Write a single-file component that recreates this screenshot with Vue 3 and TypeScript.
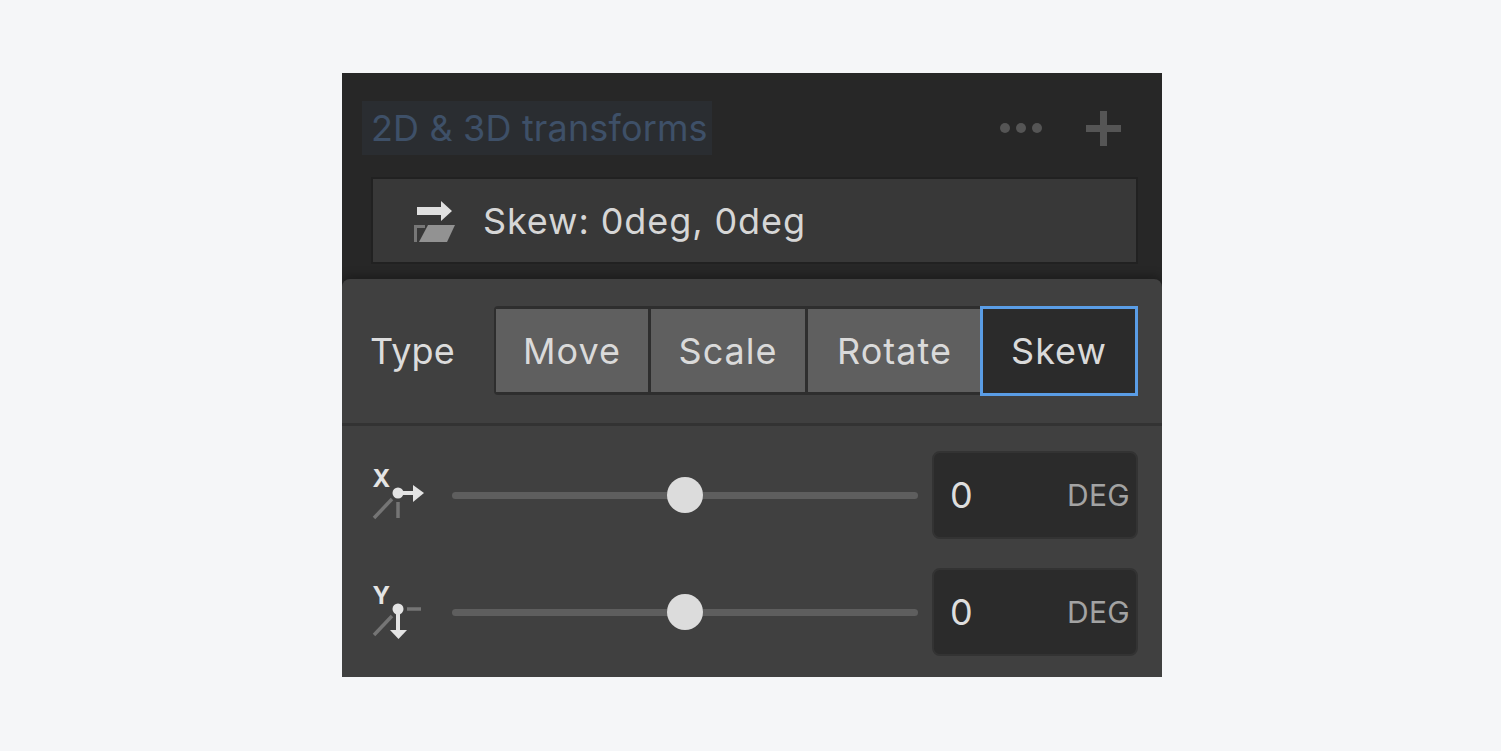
<script setup lang="ts">
const types = [
  { label: 'Move', width: 152, active: false },
  { label: 'Scale', width: 154, active: false },
  { label: 'Rotate', width: 173, active: false },
  { label: 'Skew', width: 158, active: true },
]
const axes = ['x', 'y']
</script>

<template>
  <main class="page">
    <section class="panel">
      <header class="head">
        <span class="title">2D &amp; 3D transforms</span>
        <div class="actions">
          <svg class="dots" width="42" height="10" viewBox="0 0 42 10"><circle cx="5" cy="5" r="5" /><circle cx="21" cy="5" r="5" /><circle cx="37" cy="5" r="5" /></svg>
          <svg class="plus" width="35" height="35" viewBox="0 0 35 35"><path d="M14 0h7v14h14v7H21v14h-7V21H0v-7h14z" /></svg>
        </div>
      </header>
      <div class="summary">
        <svg class="skew-icon" width="42" height="42" viewBox="0 0 42 42">
          <path d="M3 6h24V0l11 10-11 10v-6H3z" fill="#e0e0e0" />
          <path d="M14 24h27l-8 17H5z" fill="#929292" />
          <path d="M11 25.500H1.500V41" fill="none" stroke="#777" stroke-width="3" />
        </svg>
        <span>Skew: 0deg, 0deg</span>
      </div>
      <div class="editor">
        <div class="type-row">
          <span class="type-label">Type</span>
          <div class="segments">
            <button v-for="t in types" :key="t.label" class="segment" :class="{ active: t.active }" :style="{ width: t.width + 'px' }">{{ t.label }}</button>
          </div>
        </div>
        <div class="sliders">
          <div v-for="axis in axes" :key="axis" class="slider-row">
            <svg class="axis-icon" width="60" height="60" viewBox="0 0 60 60">
              <text x="2.500" y="22" class="axis-letter">{{ axis.toUpperCase() }}</text>
              <path d="M4 53 22 34" stroke="#757575" stroke-width="3.500" />
              <template v-if="axis === 'x'">
                <path d="M28 37v16" stroke="#757575" stroke-width="3.500" />
                <path d="M28 28h18" stroke="#e4e4e4" stroke-width="4" />
                <path d="M43 20l11 8-11 9z" fill="#e4e4e4" />
              </template>
              <template v-else>
                <path d="M37 27h14" stroke="#757575" stroke-width="3.500" />
                <path d="M28 27v24" stroke="#e4e4e4" stroke-width="4" />
                <path d="M20 48h17l-8.500 9z" fill="#e4e4e4" />
              </template>
              <circle cx="28" :cy="axis === 'x' ? 28 : 27" r="5.500" fill="#e4e4e4" />
            </svg>
            <div class="track"><span class="thumb"></span></div>
            <div class="number">
              <span class="value">0</span>
              <span class="unit">DEG</span>
            </div>
          </div>
        </div>
      </div>
    </section>
  </main>
</template>

<style>
html, body { margin: 0; background: #f5f6f8; }
</style>

<style scoped>
.page {
  width: 1501px;
  height: 751px;
  box-sizing: border-box;
  padding-top: 73px;
  display: flex;
  justify-content: center;
  background: #f5f6f8;
  overflow: hidden;
  font-family: Inter, "Liberation Sans", sans-serif;
  color: #d9d9d9;
}
.panel {
  width: 820px;
  height: 604px;
  margin-left: 3px;
  display: flex;
  flex-direction: column;
  background: #272727;
  overflow: hidden;
}
.head {
  height: 104px;
  box-sizing: border-box;
  padding: 28px 41px 0 20px;
  display: flex;
  justify-content: space-between;
  align-items: flex-start;
}
.title {
  height: 54px;
  width: 350px;
  box-sizing: border-box;
  padding-left: 9px;
  background: #2a2d31;
  color: #3e5068;
  font-size: 36px;
  line-height: 54px;
  letter-spacing: 0.15px;
  white-space: nowrap;
}
.actions {
  height: 54px;
  display: flex;
  align-items: center;
  gap: 44px;
}
.dots { fill: #555; }
.plus { fill: #555; }
.summary {
  margin: 0 24px 0 29px;
  height: 87px;
  box-sizing: border-box;
  border: 2px solid #212121;
  background: #383838;
  display: flex;
  align-items: center;
  padding-left: 41px;
  gap: 27px;
  font-size: 36px;
  letter-spacing: 0.9px;
  color: #d6d6d6;
}
.skew-icon { flex: none; margin-top: 2px; }
.editor {
  margin-top: 15px;
  flex: 1;
  background: #404040;
  border-radius: 8px 8px 0 0;
  box-shadow: 0 -4px 8px rgba(0, 0, 0, 0.25);
  display: flex;
  flex-direction: column;
}
.type-row {
  height: 147px;
  box-sizing: border-box;
  padding: 27px 24px 0 28px;
  border-bottom: 3px solid #333;
  display: flex;
  align-items: flex-start;
}
.type-label {
  width: 124px;
  font-size: 36px;
  line-height: 91px;
  letter-spacing: 0.2px;
  color: #dcdcdc;
}
.segments {
  width: 643px;
  height: 89px;
  display: flex;
  background: #2e2e2e;
  border-radius: 4px;
  box-sizing: border-box;
  padding: 3px 0 3px 2px;
  gap: 3px;
}
.segment {
  flex: none;
  border: 0;
  padding: 0;
  background: #5f5f5f;
  color: #dadada;
  font: inherit;
  font-size: 36px;
  letter-spacing: 1px;
}
.segment:nth-child(3) { margin-right: -3px; }
.segment.active {
  margin: -3px -1px -4px;
  box-sizing: border-box;
  height: 90px;
  background: #2b2b2b;
  border: 3px solid #5a9de6;
}
.sliders {
  padding: 25px 23px 0 28px;
  display: flex;
  flex-direction: column;
  gap: 29px;
}
.slider-row {
  height: 88px;
  display: flex;
  align-items: center;
}
.axis-icon { flex: none; width: 60px; height: 60px; margin-right: 22px; }
.axis-letter { font: 700 24px Inter, "Liberation Sans", sans-serif; fill: #e4e4e4; }
.track {
  position: relative;
  width: 466px;
  height: 7px;
  border-radius: 4px;
  background: #5e5e5e;
  margin-right: 14px;
}
.thumb {
  position: absolute;
  left: 215px;
  top: -15px;
  width: 36px;
  height: 36px;
  border-radius: 50%;
  background: #dcdcdc;
}
.number {
  width: 206px;
  height: 88px;
  box-sizing: border-box;
  border: 2px solid #333;
  border-radius: 8px;
  background: #2b2b2b;
  display: flex;
  align-items: center;
  justify-content: space-between;
  padding: 0 6px 0 16px;
}
.value { font-size: 36px; color: #dedede; }
.unit { font-size: 30px; letter-spacing: 0.3px; color: #a3a3a3; }
</style>
